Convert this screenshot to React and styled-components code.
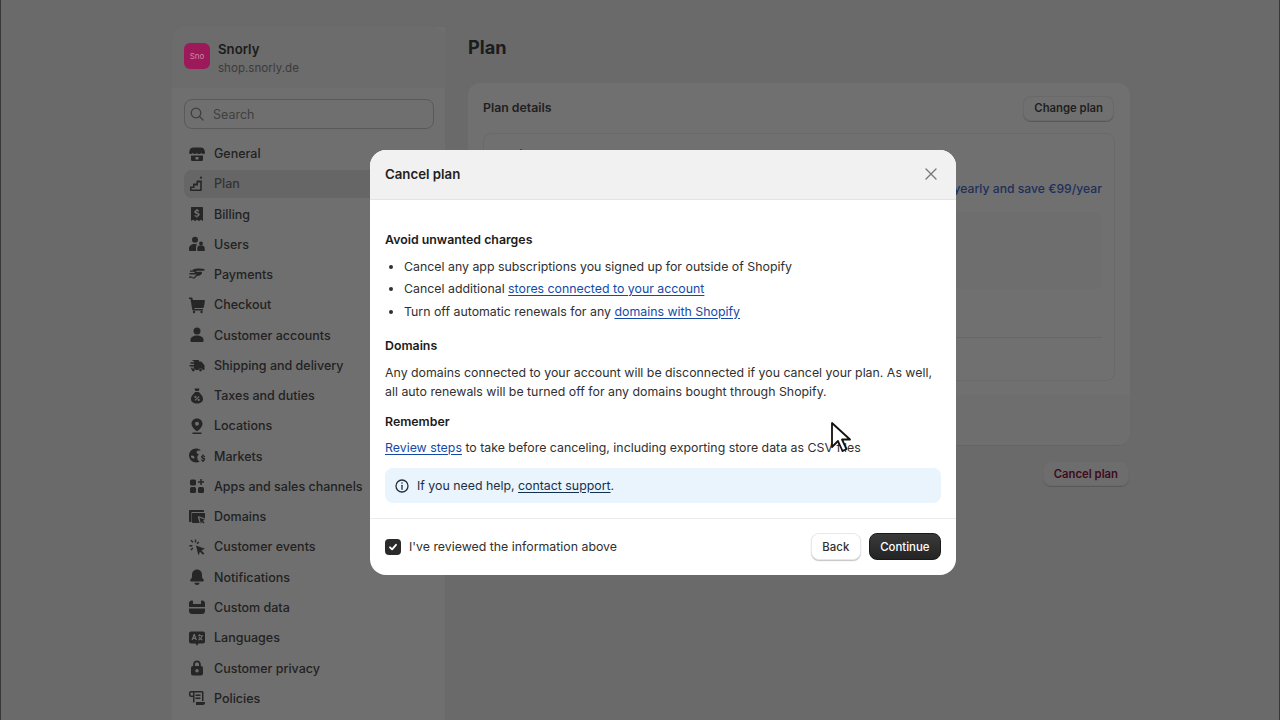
import React from 'react';
import styled, { createGlobalStyle } from 'styled-components';

const GlobalStyle = createGlobalStyle`
  html, body {
    margin: 0;
    padding: 0;
    height: 720px;
    overflow: hidden;
    background: #6a6a6a;
    font-family: Inter, "Liberation Sans", sans-serif;
  }
`;

const Page = styled.div`
  position: relative;
  width: 1280px;
  height: 720px;
  overflow: hidden;
  display: flex;
  padding-left: 172px;
  box-sizing: border-box;
  background: #6a6a6a;
  border-left: 1px solid #383838;
  border-right: 1px solid #383838;
`;

const Sidebar = styled.aside`
  width: 273px;
  flex-shrink: 0;
  margin-left: -1px;
  margin-top: 27px;
  box-sizing: border-box;
  border-radius: 12px 0 0 0;
  background: #6f6f6f;
`;

const ShopHeader = styled.div`
  display: flex;
  align-items: center;
  gap: 8px;
  height: 61px;
  padding: 2px 12px 0;
  box-sizing: border-box;
  margin-bottom: 11px;
  border-radius: 12px 12px 0 0;
  background: #6c6c6c;
`;

const ShopLogo = styled.div`
  width: 26px;
  height: 26px;
  margin-top: -5px;
  border-radius: 6px;
  background: #9c1a5a;
  color: #c98aa8;
  font-size: 8px;
  display: flex;
  align-items: center;
  justify-content: center;
`;

const ShopName = styled.div`
  font-size: 13.2px;
  font-weight: 600;
  line-height: 18px;
  color: #1b1b1b;
`;

const ShopUrl = styled.div`
  margin-top: 1px;
  font-size: 11.6px;
  font-weight: 400;
  line-height: 19px;
  color: #3b3b3b;
`;

const SearchBox = styled.div`
  display: flex;
  align-items: center;
  gap: 8px;
  height: 30px;
  margin: 0 11px 10.5px 12px;
  padding: 0 4px;
  box-sizing: border-box;
  border: 1px solid #595959;
  border-radius: 8px;
  color: #404040;
  font-size: 12.5px;
  font-weight: 400;
  svg { flex-shrink: 0; color: #3f3f3f; }
`;

const NavList = styled.nav`
  display: flex;
  flex-direction: column;
  padding: 0 12px;
`;

const NavItem = styled.div`
  display: flex;
  align-items: center;
  gap: 7px;
  height: 28px;
  margin-bottom: 2.28px;
  padding: 0 3px;
  border-radius: 8px;
  font-size: 12.5px;
  font-weight: 500;
  white-space: nowrap;
  color: ${(p) => (p.$active ? '#333333' : '#222222')};
  background: ${(p) => (p.$active ? '#666666' : 'transparent')};
  svg { flex-shrink: 0; color: #262626; }
`;

const Main = styled.main`
  width: 662px;
  margin-left: 23px;
  padding-top: 36px;
`;

const PageTitle = styled.h1`
  margin: 0 0 24px;
  font-size: 18.2px;
  line-height: 23px;
  font-weight: 700;
  color: #1c1c1c;
`;

const Card = styled.section`
  height: 363px;
  display: flex;
  flex-direction: column;
  border-radius: 12px;
  background: #707070;
  border-bottom: 1px solid #646464;
  box-sizing: border-box;
`;

const CardHead = styled.div`
  display: flex;
  align-items: center;
  justify-content: space-between;
  height: 50px;
  padding: 0 16px 0 15px;
`;

const CardTitle = styled.h2`
  margin: 0 0 2px;
  font-size: 12.3px;
  font-weight: 600;
  color: #1f1f1f;
`;

const GhostButton = styled.button`
  height: 25px;
  padding: 0 11px;
  border: 0;
  border-radius: 8px;
  background: ${(p) => (p.$footer ? '#6d6d6d' : '#707070')};
  box-shadow: 0 1px 0 #585858, inset 0 0 0 1px #696969;
  font: 600 11.3px Inter, sans-serif;
  color: ${(p) => (p.$danger ? '#3f0a1c' : '#1f1f1f')};
`;

const PlanBox = styled.div`
  height: 248px;
  margin: 0 15px;
  box-sizing: border-box;
  border: 1px solid #696969;
  border-radius: 8px;
  padding: 13px 12px 0 12px;
  display: flex;
  flex-direction: column;
`;

const PlanName = styled.div`
  font-size: 13px;
  font-weight: 600;
  line-height: 16px;
  color: #1f1f1f;
`;

const UpgradeLink = styled.div`
  margin-top: 17px;
  text-align: right;
  font-size: 12.2px;
  font-weight: 500;
  line-height: 17px;
  color: #1e2f5c;
`;

const PlanShade = styled.div`
  height: 77px;
  margin-top: 15px;
  border-radius: 8px;
  background: #6e6e6e;
`;

const PlanRule = styled.div`
  height: 1px;
  margin-top: ${(p) => p.$gap}px;
  background: #676767;
`;

const CardFoot = styled.div`
  flex: 1;
  margin-top: 14px;
  background: #6e6e6e;
  border-radius: 0 0 12px 12px;
`;

const PageActions = styled.div`
  display: flex;
  justify-content: flex-end;
  margin-top: 15px;
  padding-right: 1px;
`;

const Modal = styled.div`
  position: absolute;
  left: 369px;
  top: 150px;
  width: 586px;
  height: 425px;
  display: flex;
  flex-direction: column;
  border-radius: 16px;
  overflow: hidden;
  background: #ffffff;
  color: #202020;
`;

const ModalHead = styled.header`
  flex-shrink: 0;
  height: 50px;
  display: flex;
  align-items: center;
  justify-content: space-between;
  padding: 0 17px 2px 15px;
  box-sizing: border-box;
  background: #f1f1f1;
  border-bottom: 1px solid #e4e4e4;
  color: #767676;
`;

const ModalTitle = styled.h3`
  margin: 0;
  font-size: 13.25px;
  font-weight: 600;
  color: #202020;
`;

const ModalBody = styled.div`
  flex: 1;
  padding: 29.5px 15px 0;
  font-size: 12.35px;
  font-weight: 400;
`;

const SectionTitle = styled.h4`
  margin: 0;
  font-size: 12.35px;
  line-height: 19px;
  font-weight: 600;
  color: #1b1b1b;
`;

const BulletList = styled.ul`
  margin: 8px 0 15.5px;
  padding: 0 0 0 19px;
  list-style: disc;
  li {
    line-height: 19px;
    margin-bottom: 3.5px;
    color: #303030;
  }
  li:last-child { margin-bottom: 0; }
`;

const Copy = styled.p`
  margin: ${(p) => p.$before}px 0 ${(p) => p.$after}px;
  line-height: 19px;
  color: #303030;
`;

const TextLink = styled.a`
  color: #134aa8;
  text-decoration: underline;
  text-underline-offset: 2px;
`;

const HelpBanner = styled.div`
  display: flex;
  align-items: center;
  gap: 7px;
  height: 35px;
  margin-top: 11px;
  padding: 0 9px;
  border-radius: 8px;
  background: #e9f4fd;
  color: #1f2f3f;
  a {
    color: #12304f;
    text-decoration: underline;
    text-underline-offset: 2px;
  }
`;

const ModalFoot = styled.footer`
  flex-shrink: 0;
  height: 57px;
  display: flex;
  align-items: center;
  justify-content: space-between;
  padding: 0 15px 1px;
  box-sizing: border-box;
  border-top: 1px solid #ebebeb;
`;

const CheckRow = styled.label`
  display: flex;
  align-items: center;
  gap: 8px;
  font-size: 12.35px;
  color: #303030;
`;

const CheckBox = styled.span`
  width: 16px;
  height: 16px;
  border-radius: 4px;
  background: #2a2a2a;
  color: #ffffff;
  display: flex;
  align-items: center;
  justify-content: center;
`;

const FootActions = styled.div`
  display: flex;
  gap: 8px;
`;

const FootButton = styled.button`
  height: 27px;
  padding: 0 10.5px;
  border-radius: 8px;
  font: 500 11.4px Inter, sans-serif;
  border: ${(p) => (p.$primary ? '1px solid #1a1a1a' : '1px solid #e8e8e8')};
  background: ${(p) => (p.$primary ? 'linear-gradient(#3a3a3a, #242424)' : '#ffffff')};
  color: ${(p) => (p.$primary ? '#ffffff' : '#303030')};
  box-shadow: ${(p) => (p.$primary ? 'none' : '0 1px 1px #c4c4c4')};
`;

const Cursor = styled.svg`
  position: absolute;
  left: 829px;
  top: 421px;
`;

const Icon = ({ children }) => (
  <svg width="20" height="20" viewBox="0 0 20 20" fill="currentColor">
    {children}
  </svg>
);

const icons = {
  General: (
    <Icon>
      <path d="M6 3.500h8c1.800 0 3.200 1.200 3.600 3l.4 1.700c.2 1-.5 1.800-1.500 1.800-.8 0-1.500-.4-2-1-.6.6-1.500 1-2.500 1s-1.800-.4-2-1c-.5.6-1.300 1-2.200 1s-1.600-.4-2.100-1c-.5.6-1.200 1-2 1-1 0-1.700-.8-1.500-1.800l.4-1.700c.4-1.800 1.800-3 3.900-3z" />
      <path d="M4 11.500h12v4c0 1-.8 1.500-1.500 1.500h-9c-.7 0-1.500-.5-1.500-1.500zM8.500 13v2.500h3V13z" fillRule="evenodd" />
    </Icon>
  ),
  Plan: (
    <Icon>
      <circle cx="14" cy="3.700" r="1.100" />
      <path d="M13.200 6.500h1.600v9.500c0 .6-.4 1-1 1H4c-.6 0-1-.4-1-1v-2.500c0-.6.400-1 1-1h2v-2c0-.6.400-1 1-1h2.500v-2c0-.6.400-1 1-1zM11 8.500v3H7.500v2.500h-3v1.500h8.700v-7z" fillRule="evenodd" />
    </Icon>
  ),
  Billing: (
    <Icon>
      <path d="M5 3h10c.6 0 1 .4 1 1v13l-2-1.300-2 1.300-2-1.300-2 1.300-2-1.300L4 17V4c0-.6.400-1 1-1zm4.300 2v1c-1.200.2-2 1-2 2 0 1.200 1 1.700 2.300 2 1 .2 1.300.4 1.300.8 0 .4-.5.700-1.200.700-.7 0-1.300-.2-1.800-.6l-.6 1.100c.5.4 1.200.6 2 .7v.9h1.400v-1c1.200-.2 2-1 2-2 0-1.300-1-1.800-2.300-2.100-1-.2-1.300-.4-1.300-.7 0-.4.400-.6 1-.6.600 0 1.200.2 1.600.5l.6-1.100c-.5-.3-1-.5-1.600-.6V5z" fillRule="evenodd" />
    </Icon>
  ),
  Users: (
    <Icon>
      <circle cx="8" cy="5.800" r="3" />
      <path d="M2 14.500C2 11.800 4.500 10 7.500 10c1 0 2 .2 2.800.6-.8.700-1.300 1.700-1.300 2.900V17H3c-.6 0-1-.4-1-1z" />
      <circle cx="14" cy="9.300" r="1.900" />
      <path d="M10.300 14c0-1.500 1.500-2.800 3.700-2.800s3.700 1.300 3.700 2.800v3h-7.400z" />
    </Icon>
  ),
  Payments: (
    <Icon>
      <path d="M6 4.500c2-1 4-1.200 6.500-1 1.500.1 3.500.4 5 .5v1.500c-1 .1-1.800.3-2.800.3h-4C9.500 5.800 9 6.200 9 6.800h5.500c.4 0 .5.3.5.6 0 1.600-1.500 3-4 3.300-1 .1-1.500.5-2 1.300-.5.900-1.300 1.500-2.300 1.500H5.500v-1.300h1.200c.6 0 1-.4 1.300-1 .5-1 1.200-1.400 2.200-1.700H2.500V8h5.300c-.3-.3-.4-.7-.3-1.200H3V5.500h2.500z" />
      <path d="M2 11.500h3.500v1.300H2z" />
    </Icon>
  ),
  Checkout: (
    <Icon>
      <path d="M2 2.500h2.500c.6 0 1 .3 1.100.9L5.800 5H17c.6 0 1 .5.900 1.100l-1 6c-.1.500-.5.900-1 .9H7.300l.2 1H16v1.500H6.300c-.5 0-.9-.3-1-.8L3.500 4H2z" />
      <circle cx="7" cy="17" r="1.200" />
      <circle cx="14.500" cy="17" r="1.200" />
    </Icon>
  ),
  'Customer accounts': (
    <Icon>
      <circle cx="10" cy="6" r="3.500" />
      <path d="M3.500 15c0-2.800 3-4.500 6.500-4.500s6.500 1.700 6.500 4.500v1c0 .6-.4 1-1 1h-11c-.6 0-1-.4-1-1z" />
    </Icon>
  ),
  'Shipping and delivery': (
    <Icon>
      <path d="M5.500 5H11c.6 0 1 .4 1 1v.5h1.800c.4 0 .8.200 1 .5l2.400 3c.2.200.3.500.3.800V14c0 .6-.4 1-1 1h-.7a2.300 2.300 0 0 0-4.500 0H8.500a2.300 2.300 0 0 0-4.500 0H4v-2.200h3V11.500H2.500V10H7V8.700H3.500V7.300H7V6H5.500z" />
      <circle cx="6.300" cy="15" r="1.400" />
      <circle cx="13.500" cy="15" r="1.400" />
    </Icon>
  ),
  'Taxes and duties': (
    <Icon>
      <path d="M7.500 2.500h5l-.8 2.500H8.300zM8 6h4c.4 1.300 4 3.500 4 7 0 2.800-2.500 4.500-6 4.500S4 15.800 4 13c0-3.500 3.600-5.700 4-7zm3.700 3.900L7.500 13.900l.9.900 4.200-4zM8.400 9.800a1.100 1.100 0 1 0 0 2.200 1.100 1.100 0 0 0 0-2.200zm3.300 3a1.100 1.100 0 1 0 0 2.200 1.100 1.100 0 0 0 0-2.200z" fillRule="evenodd" />
    </Icon>
  ),
  Locations: (
    <Icon>
      <path d="M10 2.500c3.300 0 5.500 2.500 5.500 5.300 0 2.600-2.300 5-4.600 7a1.400 1.400 0 0 1-1.800 0c-2.300-2-4.600-4.400-4.600-7C4.500 5 6.700 2.500 10 2.500zm0 3.300a2 2 0 1 0 0 4 2 2 0 0 0 0-4z" fillRule="evenodd" />
      <path d="M5.500 16.500h9V18h-9z" />
    </Icon>
  ),
  Markets: (
    <Icon>
      <path d="M9 2.500c1.800 0 3.500.6 4.800 1.700-.8.300-1.800.5-2.300.4-.8-.1-1.500.3-1.800 1-.4.800 0 1.700.8 2.100l1.500.7c-1 .6-1.700 1.700-1.700 3 0 1.800 1 3.300 2.500 4.100-1.100.6-2.400 1-3.800 1A7 7 0 0 1 9 2.500zM5 9.500c-.6 0-1 .4-1 1 0 1.100 1 2 2.300 2 .7 0 1.200-.5 1.200-1.100 0-1.100-1.100-1.900-2.500-1.900z" fillRule="evenodd" />
      <path d="M15.300 8.500h1.400v1c.8.200 1.300.6 1.500 1l-1 .7c-.3-.4-.7-.6-1.100-.6-.5 0-.7.200-.7.400 0 .3.400.4 1 .6 1 .3 1.800.7 1.800 1.700 0 .9-.6 1.500-1.500 1.700v1h-1.400v-1c-.7-.2-1.300-.5-1.600-1l1-.8c.3.400.8.600 1.300.6.500 0 .8-.2.800-.5 0-.3-.4-.4-1.100-.6-1-.3-1.700-.8-1.700-1.700 0-.8.600-1.400 1.300-1.600z" />
    </Icon>
  ),
  'Apps and sales channels': (
    <Icon>
      <rect x="3" y="3.500" width="6" height="6" rx="1.500" />
      <rect x="3" y="11" width="6" height="6" rx="1.500" />
      <rect x="11" y="11" width="6" height="6" rx="1.500" />
      <path d="M13.300 3h1.500v2.300H17v1.500h-2.200V9h-1.500V6.800H11V5.300h2.300z" />
    </Icon>
  ),
  Domains: (
    <Icon>
      <path d="M3 3h13c.6 0 1 .4 1 1v1H4.500v10H3c-.6 0-1-.4-1-1V4c0-.6.400-1 1-1z" />
      <path d="M6 6h11c.6 0 1 .4 1 1v4.500l-5.800-2.200c-.8-.3-1.600.5-1.300 1.300l1.800 5.400H6c-.6 0-1-.4-1-1V7c0-.6.400-1 1-1z" />
      <path d="M12.500 10.500l5.500 2.200-2.200 1 1.700 1.800-1 1-1.800-1.700-.8 2.200z" />
    </Icon>
  ),
  'Customer events': (
    <Icon>
      <path d="M9 8.500l9 3.300-3.600 1.600 3 3-1.400 1.400-3-3-1.600 3.700z" />
      <path d="M7.800 2.500h1.400v3H7.800zM2.300 8h3v1.400h-3zM3.400 3.800l1-1 2 2-1 1zM5.400 10.500l1 1-2 2-1-1zM11.300 4.400l1 1-1.800 1.800-1-1z" />
    </Icon>
  ),
  Notifications: (
    <Icon>
      <path d="M10 2.500c3 0 5 2.300 5 5.200v2.100c0 .6.300 1.200.7 1.700l.9 1.100c.7.800.1 2-1 2H4.400c-1.100 0-1.700-1.200-1-2l.9-1.100c.4-.5.700-1.100.7-1.700V7.700c0-2.900 2-5.200 5-5.200z" />
      <path d="M7.500 15.700h5c0 1.300-1.100 2.300-2.500 2.300s-2.500-1-2.500-2.300z" />
    </Icon>
  ),
  'Custom data': (
    <Icon>
      <path d="M5 3.500c.6 0 1 .4 1 1v2.500h8V4.500c0-.6.400-1 1-1h.2c1.500 0 2.800 1.300 2.800 2.800V14c0 1.700-1.300 3-3 3H5c-1.700 0-3-1.300-3-3V6.300c0-1.500 1.300-2.800 2.800-2.800zM2 10v1.500h16V10z" fillRule="evenodd" />
    </Icon>
  ),
  Languages: (
    <Icon>
      <path d="M4 3.500h12c1.100 0 2 .9 2 2v8c0 1.100-.9 2-2 2h-4.500L10 17.800 8.500 15.500H4c-1.100 0-2-.9-2-2v-8c0-1.100.9-2 2-2zM6.700 6L4.500 12h1.300l.4-1.100h2l.4 1.100h1.300L7.800 6zm.5 1.900l.6 1.800H6.600zm4.800-1.600v1h-1v1h3.300c-.2.700-.5 1.200-.9 1.700-.3-.3-.5-.7-.7-1h-1.100c.3.600.6 1.200 1 1.700-.5.300-1 .6-1.600.7l.5 1c.7-.2 1.300-.5 1.900-1 .5.400 1.200.8 1.900 1l.5-1c-.6-.1-1.100-.4-1.600-.7.600-.7 1-1.500 1.200-2.400h.8v-1h-2.900v-1z" fillRule="evenodd" />
    </Icon>
  ),
  'Customer privacy': (
    <Icon>
      <path d="M10 2.500c2.200 0 3.800 1.700 3.800 3.800V8h.2c1.100 0 2 .9 2 2v5.500c0 1.100-.9 2-2 2H6c-1.100 0-2-.9-2-2V10c0-1.100.9-2 2-2h.2V6.300c0-2.100 1.600-3.800 3.800-3.800zM8 8h4V6.300C12 5.100 11.200 4.200 10 4.200S8 5.100 8 6.300zm2 3a1.700 1.700 0 1 0 0 3.400 1.700 1.700 0 0 0 0-3.400z" fillRule="evenodd" />
    </Icon>
  ),
  Policies: (
    <Icon>
      <path d="M4 3h11c.8 0 1.500.7 1.500 1.500V13H15V4.500H7.200c.2.300.3.600.3 1V9H4C2.900 9 2 8.100 2 7V5c0-1.100.9-2 2-2zm0 1.500c-.3 0-.5.200-.5.500v2c0 .3.200.5.500.5h2V5c0-.3-.2-.5-.5-.5z" fillRule="evenodd" />
      <path d="M8.500 6.500h5V8h-5zM8.500 9.500h5V11h-5zM6 9h1.500v5.500H6zM9 14h9v1c0 1.100-.9 2-2 2H9z" />
    </Icon>
  ),
};

const navItems = Object.keys(icons);

export default function App() {
  return (
    <Page>
      <GlobalStyle />
      <Sidebar>
        <ShopHeader>
          <ShopLogo>Sno</ShopLogo>
          <div>
            <ShopName>Snorly</ShopName>
            <ShopUrl>shop.snorly.de</ShopUrl>
          </div>
        </ShopHeader>
        <SearchBox>
          <svg width="16" height="16" viewBox="0 0 16 16" fill="none" stroke="currentColor" strokeWidth="1.300">
            <circle cx="7" cy="7" r="4.800" />
            <path d="M10.500 10.500L14 14" strokeLinecap="round" />
          </svg>
          Search
        </SearchBox>
        <NavList>
          {navItems.map((name) => (
            <NavItem key={name} $active={name === 'Plan'}>
              {icons[name]}
              {name}
            </NavItem>
          ))}
        </NavList>
      </Sidebar>
      <Main>
        <PageTitle>Plan</PageTitle>
        <Card>
          <CardHead>
            <CardTitle>Plan details</CardTitle>
            <GhostButton>Change plan</GhostButton>
          </CardHead>
          <PlanBox>
            <PlanName>Basic</PlanName>
            <UpgradeLink>Pay yearly and save €99/year</UpgradeLink>
            <PlanShade />
            <PlanRule $gap={48} />
          </PlanBox>
          <CardFoot />
        </Card>
        <PageActions>
          <GhostButton $danger $footer>Cancel plan</GhostButton>
        </PageActions>
      </Main>
      <Modal>
        <ModalHead>
          <ModalTitle>Cancel plan</ModalTitle>
          <svg width="16" height="16" viewBox="0 0 16 16" fill="none" stroke="currentColor" strokeWidth="1.300" strokeLinecap="round">
            <path d="M3 3l10 10M13 3L3 13" />
          </svg>
        </ModalHead>
        <ModalBody>
          <SectionTitle>Avoid unwanted charges</SectionTitle>
          <BulletList>
            <li>Cancel any app subscriptions you signed up for outside of Shopify</li>
            <li>Cancel additional <TextLink>stores connected to your account</TextLink></li>
            <li>Turn off automatic renewals for any <TextLink>domains with Shopify</TextLink></li>
          </BulletList>
          <SectionTitle>Domains</SectionTitle>
          <Copy $before={8} $after={11}>
            Any domains connected to your account will be disconnected if you cancel your plan. As well, all auto renewals will be turned off for any domains bought through Shopify.
          </Copy>
          <SectionTitle>Remember</SectionTitle>
          <Copy $before={7} $after={0}>
            <TextLink>Review steps</TextLink> to take before canceling, including exporting store data as CSV files
          </Copy>
          <HelpBanner>
            <svg width="16" height="16" viewBox="0 0 16 16" fill="none" stroke="currentColor" strokeWidth="1.300">
              <circle cx="8" cy="8" r="6" />
              <path d="M8 7.300v4" strokeLinecap="round" />
              <circle cx="8" cy="5" r=".8" fill="currentColor" stroke="none" />
            </svg>
            <span>If you need help, <a>contact support</a>.</span>
          </HelpBanner>
        </ModalBody>
        <ModalFoot>
          <CheckRow>
            <CheckBox>
              <svg width="12" height="12" viewBox="0 0 12 12" fill="none" stroke="currentColor" strokeWidth="1.800" strokeLinecap="round" strokeLinejoin="round">
                <path d="M3 6.300l2.100 2.100L9 3.800" />
              </svg>
            </CheckBox>
            I've reviewed the information above
          </CheckRow>
          <FootActions>
            <FootButton>Back</FootButton>
            <FootButton $primary>Continue</FootButton>
          </FootActions>
        </ModalFoot>
      </Modal>
      <Cursor width="22" height="32" viewBox="0 0 22 32">
        <path d="M2 2v24l6-6 4.500 10 4-2-4.500-9.500H20z" fill="#ffffff" stroke="#111111" strokeWidth="1.800" strokeLinejoin="round" />
      </Cursor>
    </Page>
  );
}
